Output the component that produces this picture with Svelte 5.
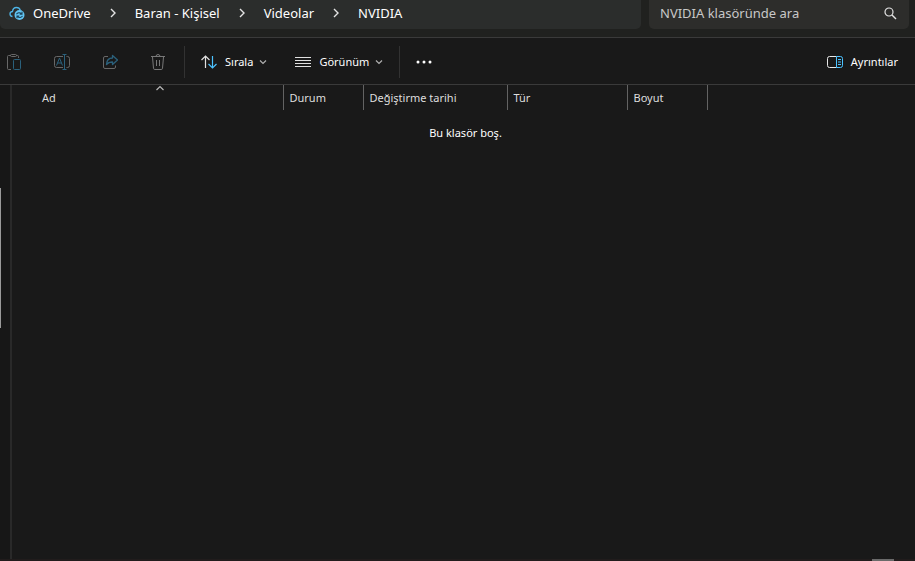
<script lang="ts">
	const crumbs = ['OneDrive', 'Baran - Kişisel', 'Videolar', 'NVIDIA'];

	const columns = [
		{ label: 'Durum', size: 'small' },
		{ label: 'Değiştirme tarihi', size: 'large' },
		{ label: 'Tür', size: 'medium' },
		{ label: 'Boyut', size: 'small' }
	];

	let search = '';
</script>

<svelte:head>
	<title>NVIDIA</title>
</svelte:head>

<div class="explorer">
	<header>
		<nav class="address">
			<svg class="cloud" width="16" height="16" viewBox="0 0 16 16" fill="none">
				<path
					d="M3.5 11.5C1.8 11.4 1 10.3 1 9c0-1.400 1-2.400 2.500-2.500C3.800 3.900 5.500 2.500 7.500 2.500c1.800 0 3.200 1 3.800 2.700"
					stroke="#4db5e8"
					stroke-width="1.300"
				/>
				<circle cx="10.500" cy="10" r="5" fill="#62c5f3" />
				<path
					d="M7.500 9.300c.8-1.800 3.600-2.200 5-.5M13 6.800v2.300h-2.300M13.500 10.900c-.8 1.800-3.600 2.200-5 .5M8 13.300V11h2.300"
					stroke="#1c4258"
					stroke-width="1.100"
				/>
			</svg>
			<ol>
				{#each crumbs as crumb, i (crumb)}
					<li>
						{#if i > 0}
							<svg class="arrow" width="8" height="10" viewBox="0 0 8 10" fill="none">
								<path d="M2 1l4 4-4 4" stroke="#e4e4e4" stroke-width="1.400" />
							</svg>
						{/if}
						<a href="#{crumb}">{crumb}</a>
					</li>
				{/each}
			</ol>
		</nav>
		<label class="search">
			<input type="text" placeholder="NVIDIA klasöründe ara" bind:value={search} />
			<svg width="14" height="14" viewBox="0 0 14 14" fill="none" stroke="#e4e4e4">
				<circle cx="6" cy="6" r="4" stroke-width="1.200" />
				<path d="M9 9l4 4" stroke-width="1.400" />
			</svg>
		</label>
	</header>

	<div class="toolbar">
		<div class="actions">
			<button class="icon" disabled aria-label="Yapıştır">
				<svg width="16" height="16" viewBox="0 0 16 16" fill="none" stroke="#686868">
					<path d="M5 1.500H2.500a1 1 0 0 0-1 1v12a1 1 0 0 0 1 1H5M10 1.500h1.500a1 1 0 0 1 1 1V4" />
					<rect x="4.500" y=".5" width="6" height="2" rx="1" />
					<rect x="7.500" y="5.500" width="7" height="10" rx="1" stroke="#2b617c" />
				</svg>
			</button>
			<button class="icon" disabled aria-label="Yeniden adlandır">
				<svg width="16" height="16" viewBox="0 0 16 16" fill="none" stroke="#686868">
					<path d="M9 2.500H2.500a2 2 0 0 0-2 2v7a2 2 0 0 0 2 2H9M12.500 2.500h1a2 2 0 0 1 2 2v7a2 2 0 0 1-2 2h-1" />
					<path d="M2.500 11.500L5.500 4l3 7.500M3.500 9h4M8.500.5h4M8.500 15.500h4M10.500.5v15" stroke="#2b617c" />
				</svg>
			</button>
			<button class="icon" disabled aria-label="Paylaş">
				<svg width="16" height="16" viewBox="0 0 16 16" fill="none" stroke="#686868">
					<path d="M6 2.500H3a1.500 1.500 0 0 0-1.500 1.500v9A1.500 1.500 0 0 0 3 14.500h9a1.500 1.500 0 0 0 1.500-1.500v-1.500" />
					<path
						d="M10.500 1.500l5 4.500-5 4.500V8C7.500 8 6 8.500 4.500 10.500 4.700 6.500 7 4 10.500 4z"
						stroke="#2b617c"
						stroke-width="1.300"
						stroke-linejoin="round"
					/>
				</svg>
			</button>
			<button class="icon" disabled aria-label="Sil">
				<svg width="16" height="16" viewBox="0 0 16 16" fill="none" stroke="#787878">
					<path d="M1 2.500h14M6 2.500a2 2 0 0 1 4 0M2.500 3l1 11.300a1.300 1.300 0 0 0 1.300 1.200h6.400a1.300 1.300 0 0 0 1.300-1.200l1-11.300M6.500 6v6M9.500 6v6" />
				</svg>
			</button>
		</div>
		<div class="menus">
			<button>
				<svg width="16" height="16" viewBox="0 0 16 16" fill="none">
					<path d="M4.500 14V2M.5 6l4-4 4 4" stroke="#e0e0e0" stroke-width="1.200" />
					<path d="M11.500 2v12M7.500 10l4 4 4-4" stroke="#4cc2ff" stroke-width="1.200" />
				</svg>
				Sırala
				<svg width="8" height="6" viewBox="0 0 8 6" fill="none">
					<path d="M1 1.500l3 3 3-3" stroke="#b0b0b0" stroke-width="1.200" />
				</svg>
			</button>
			<button>
				<svg width="16" height="16" viewBox="0 0 16 16" fill="none">
					<path d="M0 3.500h16M0 6.500h16M0 9.500h16M0 12.500h16" stroke="#e0e0e0" />
				</svg>
				Görünüm
				<svg width="8" height="6" viewBox="0 0 8 6" fill="none">
					<path d="M1 1.500l3 3 3-3" stroke="#b0b0b0" stroke-width="1.200" />
				</svg>
			</button>
		</div>
		<button class="more" aria-label="Diğer">
			<svg width="16" height="4" viewBox="0 0 16 4" fill="#fff">
				<circle cx="2" cy="2" r="1.500" />
				<circle cx="8" cy="2" r="1.500" />
				<circle cx="14" cy="2" r="1.500" />
			</svg>
		</button>
		<button class="details">
			<svg width="16" height="16" viewBox="0 0 16 16" fill="none">
				<path d="M9.500 2.500h-7a2 2 0 0 0-2 2v7a2 2 0 0 0 2 2h7" stroke="#e8e8e8" />
				<path
					d="M9.500 2.500h4a2 2 0 0 1 2 2v7a2 2 0 0 1-2 2h-4zM11 5.500h3M11 8h3M11 10.500h3"
					stroke="#4cc2ff"
				/>
			</svg>
			Ayrıntılar
		</button>
	</div>

	<div class="body">
		<aside>
			<div class="thumb"></div>
		</aside>
		<main>
			<table>
				<thead>
					<tr>
						<th class="name">
							Ad
							<svg class="sorted" width="8" height="6" viewBox="0 0 8 6" fill="none">
								<path d="M.5 5L4 1.500 7.500 5" stroke="#b8b8b8" stroke-width="1.200" />
							</svg>
						</th>
						{#each columns as column (column.label)}
							<th class={column.size}>{column.label}</th>
						{/each}
						<th></th>
					</tr>
				</thead>
			</table>
			<p>Bu klasör boş.</p>
		</main>
	</div>

	<footer>
		<span></span>
	</footer>
</div>

<style>
	:global(body) {
		margin: 0;
		background: #191919;
	}

	.explorer {
		display: flex;
		flex-direction: column;
		min-height: 100vh;
		font-family: 'Noto Sans', 'Open Sans', sans-serif;
		font-size: 11px;
		line-height: 16px;
		color: #fff;
	}

	header {
		display: flex;
		gap: 8px;
		padding: 0 6px 8px 0;
		background: #20211f;
		border-bottom: 1px solid #3a3a3a;
		font-size: 13px;
	}

	.address,
	.search {
		display: flex;
		align-items: center;
		box-sizing: border-box;
		height: 29px;
		padding-bottom: 4px;
		background: #2b2d2c;
		border-radius: 0 0 5px 5px;
	}

	.address {
		flex: 1;
		gap: 8px;
		padding-left: 9px;
	}

	ol {
		display: flex;
		margin: 0;
		padding: 0;
		list-style: none;
	}

	li {
		display: flex;
		align-items: center;
	}

	.arrow {
		margin: 0 18px;
	}

	a {
		color: #fff;
		text-decoration: none;
	}

	.search {
		width: 260px;
		padding-left: 11px;
		padding-right: 12px;
		background: #2d2d2b;
	}

	input {
		flex: 1;
		min-width: 0;
		padding: 0;
		border: none;
		outline: none;
		background: none;
		color: #fff;
		font: inherit;
	}

	input::placeholder {
		color: #c8c8c8;
		opacity: 1;
	}

	.toolbar {
		display: flex;
		align-items: center;
		height: 44px;
		padding: 2px 17px 0 6px;
		border-bottom: 1px solid #3a3a3a;
	}

	button {
		display: flex;
		align-items: center;
		gap: 8px;
		padding: 0;
		border: none;
		background: none;
		color: #fff;
		font: inherit;
	}

	.actions {
		display: flex;
		gap: 32px;
		padding-right: 18px;
	}

	.menus {
		display: flex;
		align-items: center;
		gap: 28px;
		box-sizing: border-box;
		height: 32px;
		padding: 0 16px;
		border-left: 1px solid #323232;
		border-right: 1px solid #323232;
	}

	.menus button svg:last-child {
		margin-left: -2px;
	}

	.more {
		margin-left: 16px;
	}

	.details {
		margin-left: auto;
	}

	.body {
		display: flex;
		flex: 1;
	}

	aside {
		width: 10px;
		background: #171717;
		border-right: 2px solid #292929;
	}

	.thumb {
		width: 1px;
		height: 140px;
		margin-top: 103px;
		background: #9a9a9a;
	}

	main {
		flex: 1;
	}

	table {
		width: 100%;
		table-layout: fixed;
		border-collapse: collapse;
	}

	th {
		box-sizing: border-box;
		height: 25px;
		padding: 0 0 0 6px;
		border-left: 1px solid #636363;
		color: #dedede;
		font-weight: normal;
		text-align: left;
	}

	.name {
		position: relative;
		width: 271px;
		padding-left: 30px;
		border-left: none;
	}

	.sorted {
		position: absolute;
		top: 0;
		left: 144px;
	}

	.small {
		width: 80px;
	}

	.medium {
		width: 120px;
	}

	.large {
		width: 144px;
	}

	p {
		margin: 15px 0 0;
		padding-left: 4px;
		text-align: center;
	}

	footer {
		display: flex;
		justify-content: flex-end;
		padding-right: 21px;
		background: #211c1c;
	}

	footer span {
		width: 22px;
		height: 2px;
		background: #6a6a6a;
	}
</style>
